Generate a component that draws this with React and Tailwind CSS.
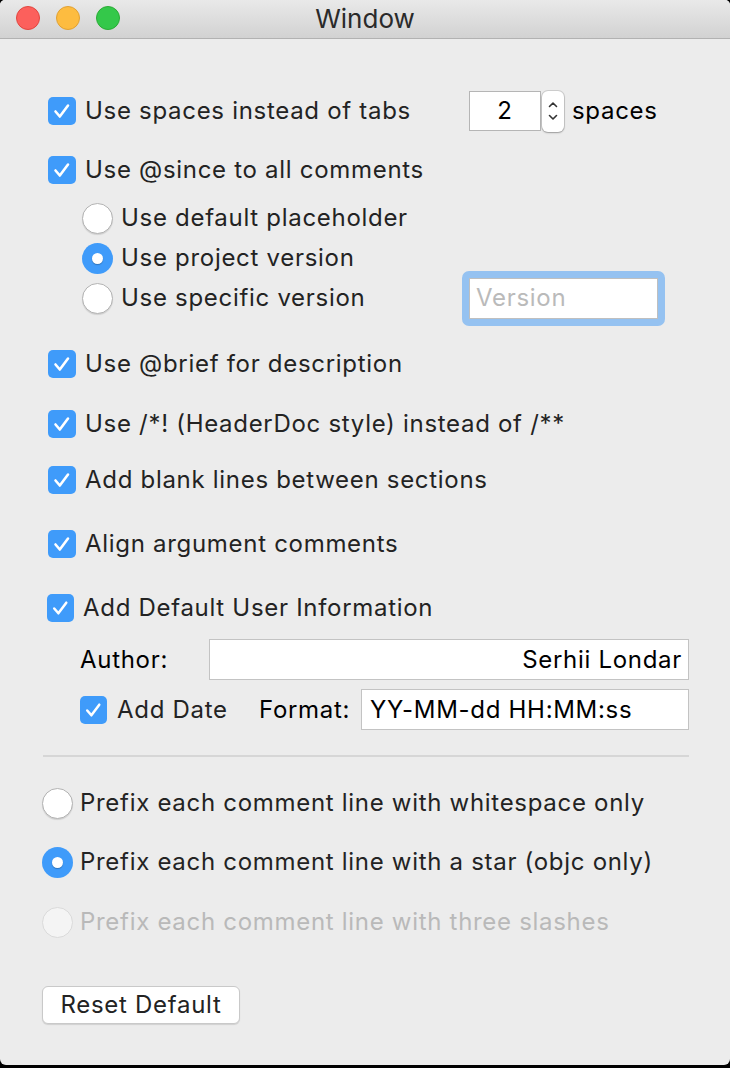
import React from 'react';

const font = { fontFamily: 'Inter, "Noto Sans", sans-serif' };

function Check({ small }) {
  return (
    <span
      className={
        small
          ? 'flex h-[28px] w-[27px] shrink-0 items-center justify-center rounded-[5px] bg-[#3f9bfa]'
          : 'flex h-[28px] w-[28px] shrink-0 items-center justify-center rounded-[5px] bg-[#3f9bfa]'
      }
    >
      <svg width="28" height="28" viewBox="0 0 28 28" fill="none">
        <path d="M7.5 14.5 L11.8 19.5 L20 8.5" stroke="white" strokeWidth="2.6" strokeLinecap="round" strokeLinejoin="round" />
      </svg>
    </span>
  );
}

function Radio({ on, disabled }) {
  if (on) {
    return (
      <span className="flex h-[31px] w-[31px] shrink-0 items-center justify-center rounded-full bg-[#3f9bfa]">
        <span className="h-[11px] w-[11px] rounded-full bg-white shadow-[0_1px_1px_rgba(0,0,0,0.25)]" />
      </span>
    );
  }
  return (
    <span
      className={
        disabled
          ? 'h-[31px] w-[31px] shrink-0 rounded-full border border-[#dadada] bg-[#f4f4f4]'
          : 'h-[31px] w-[31px] shrink-0 rounded-full border border-[#b3b3b3] bg-white shadow-[0_1px_1px_rgba(0,0,0,0.12)]'
      }
    />
  );
}

function CheckRow({ label, className = '' }) {
  return (
    <div className={`flex h-[28px] items-center gap-[9px] pl-[48px] ${className}`}>
      <Check />
      <span>{label}</span>
    </div>
  );
}

export default function App() {
  return (
    <div className="min-h-screen bg-black" style={font}>
      <div className="h-[1065px] w-[730px] overflow-hidden rounded-t-[5px] rounded-b-[6px] bg-[#ececec] text-[24px] leading-none tracking-[0.7px] text-[#232323]">
        {/* title bar */}
        <div className="relative flex h-[39px] items-center justify-center border-b border-[#b2b2b2] bg-gradient-to-b from-[#e9e9e9] to-[#d2d2d2]">
          <div className="absolute left-[16px] top-[6px] flex gap-[16px]">
            <span className="h-[24px] w-[24px] rounded-full border border-[#e2463f] bg-[#fc605c]" />
            <span className="h-[24px] w-[24px] rounded-full border border-[#e1a133] bg-[#fdbc40]" />
            <span className="h-[24px] w-[24px] rounded-full border border-[#2aac35] bg-[#34c84a]" />
          </div>
          <span className="text-[26px] tracking-normal text-[#2a2a2a]">Window</span>
        </div>

        {/* row 1 */}
        <div className="mt-[52px] flex h-[40px] items-center pl-[48px]">
          <div className="flex w-[421px] items-center gap-[9px]">
            <Check />
            <span>Use spaces instead of tabs</span>
          </div>
          <div className="flex h-[40px] w-[72px] items-center justify-center border border-[#b5b5b5] bg-white text-black">2</div>
          <div className="ml-[1px] flex h-[41px] w-[22px] flex-col items-center justify-center gap-[6px] rounded-[6px] bg-white shadow-[0_0_0_1px_rgba(0,0,0,0.12),0_1px_2px_rgba(0,0,0,0.25)]">
            <svg width="10" height="7" viewBox="0 0 10 7" fill="none">
              <path d="M1.5 5.5 L5 2 L8.5 5.5" stroke="#333" strokeWidth="1.6" strokeLinecap="round" strokeLinejoin="round" />
            </svg>
            <svg width="10" height="7" viewBox="0 0 10 7" fill="none">
              <path d="M1.5 1.5 L5 5 L8.5 1.5" stroke="#333" strokeWidth="1.6" strokeLinecap="round" strokeLinejoin="round" />
            </svg>
          </div>
          <span className="ml-[8px] text-black">spaces</span>
        </div>

        <CheckRow label="Use @since to all comments" className="mt-[25px]" />

        {/* since radios */}
        <div className="mt-[14px] flex flex-col pl-[82px]">
          <div className="flex h-[40px] items-center gap-[8px]">
            <Radio />
            <span>Use default placeholder</span>
          </div>
          <div className="flex h-[40px] items-center gap-[8px]">
            <Radio on />
            <span>Use project version</span>
          </div>
          <div className="flex h-[40px] items-center">
            <div className="flex w-[380px] items-center gap-[8px]">
              <Radio />
              <span>Use specific version</span>
            </div>
            <div className="rounded-[7px] bg-[#95c2f1] p-[7px]">
              <div className="flex h-[41px] w-[189px] items-center border border-[#bfbfbf] bg-white px-[6px] text-[#bababa]">Version</div>
            </div>
          </div>
        </div>

        <CheckRow label="Use @brief for description" className="mt-[32px]" />
        <CheckRow label="Use /*! (HeaderDoc style) instead of /**" className="mt-[32px]" />
        <CheckRow label="Add blank lines between sections" className="mt-[28px]" />
        <CheckRow label="Align argument comments" className="mt-[36px]" />

        <div className="mt-[36px] flex h-[28px] items-center gap-[9px] pl-[47px]">
          <Check small />
          <span>Add Default User Information</span>
        </div>

        <div className="mt-[17px] flex h-[41px] items-center pl-[80px]">
          <span className="w-[129px] text-black">Author:</span>
          <div className="flex h-[41px] w-[480px] items-center justify-end border border-[#c3c3c3] bg-white pr-[6px] text-black">
            Serhii Londar
          </div>
        </div>

        <div className="mt-[9px] flex h-[41px] items-center pl-[80px]">
          <div className="flex w-[179px] items-center gap-[10px]">
            <Check small />
            <span>Add Date</span>
          </div>
          <span className="w-[102px] text-black">Format:</span>
          <div className="flex h-[41px] w-[328px] items-center border border-[#c3c3c3] bg-white pl-[8px] text-black">
            YY-MM-dd HH:MM:ss
          </div>
        </div>

        <div className="ml-[43px] mt-[25px] h-[2px] w-[646px] bg-[#d6d6d6]" />

        <div className="mt-[30px] flex flex-col pl-[42px]">
          <div className="flex h-[32px] items-center gap-[7px]">
            <Radio />
            <span>Prefix each comment line with whitespace only</span>
          </div>
          <div className="mt-[27px] flex h-[32px] items-center gap-[7px]">
            <Radio on />
            <span>Prefix each comment line with a star (objc only)</span>
          </div>
          <div className="mt-[28px] flex h-[32px] items-center gap-[7px]">
            <Radio disabled />
            <span className="text-[#b9b9b9]">Prefix each comment line with three slashes</span>
          </div>
        </div>

        <div className="mt-[48px] pl-[42px]">
          <button className="flex h-[38px] w-[198px] items-center justify-center rounded-[6px] border border-[#c9c9c9] bg-white text-[24px] text-[#232323] shadow-[0_1px_1px_rgba(0,0,0,0.12)]">
            Reset Default
          </button>
        </div>
      </div>
    </div>
  );
}
